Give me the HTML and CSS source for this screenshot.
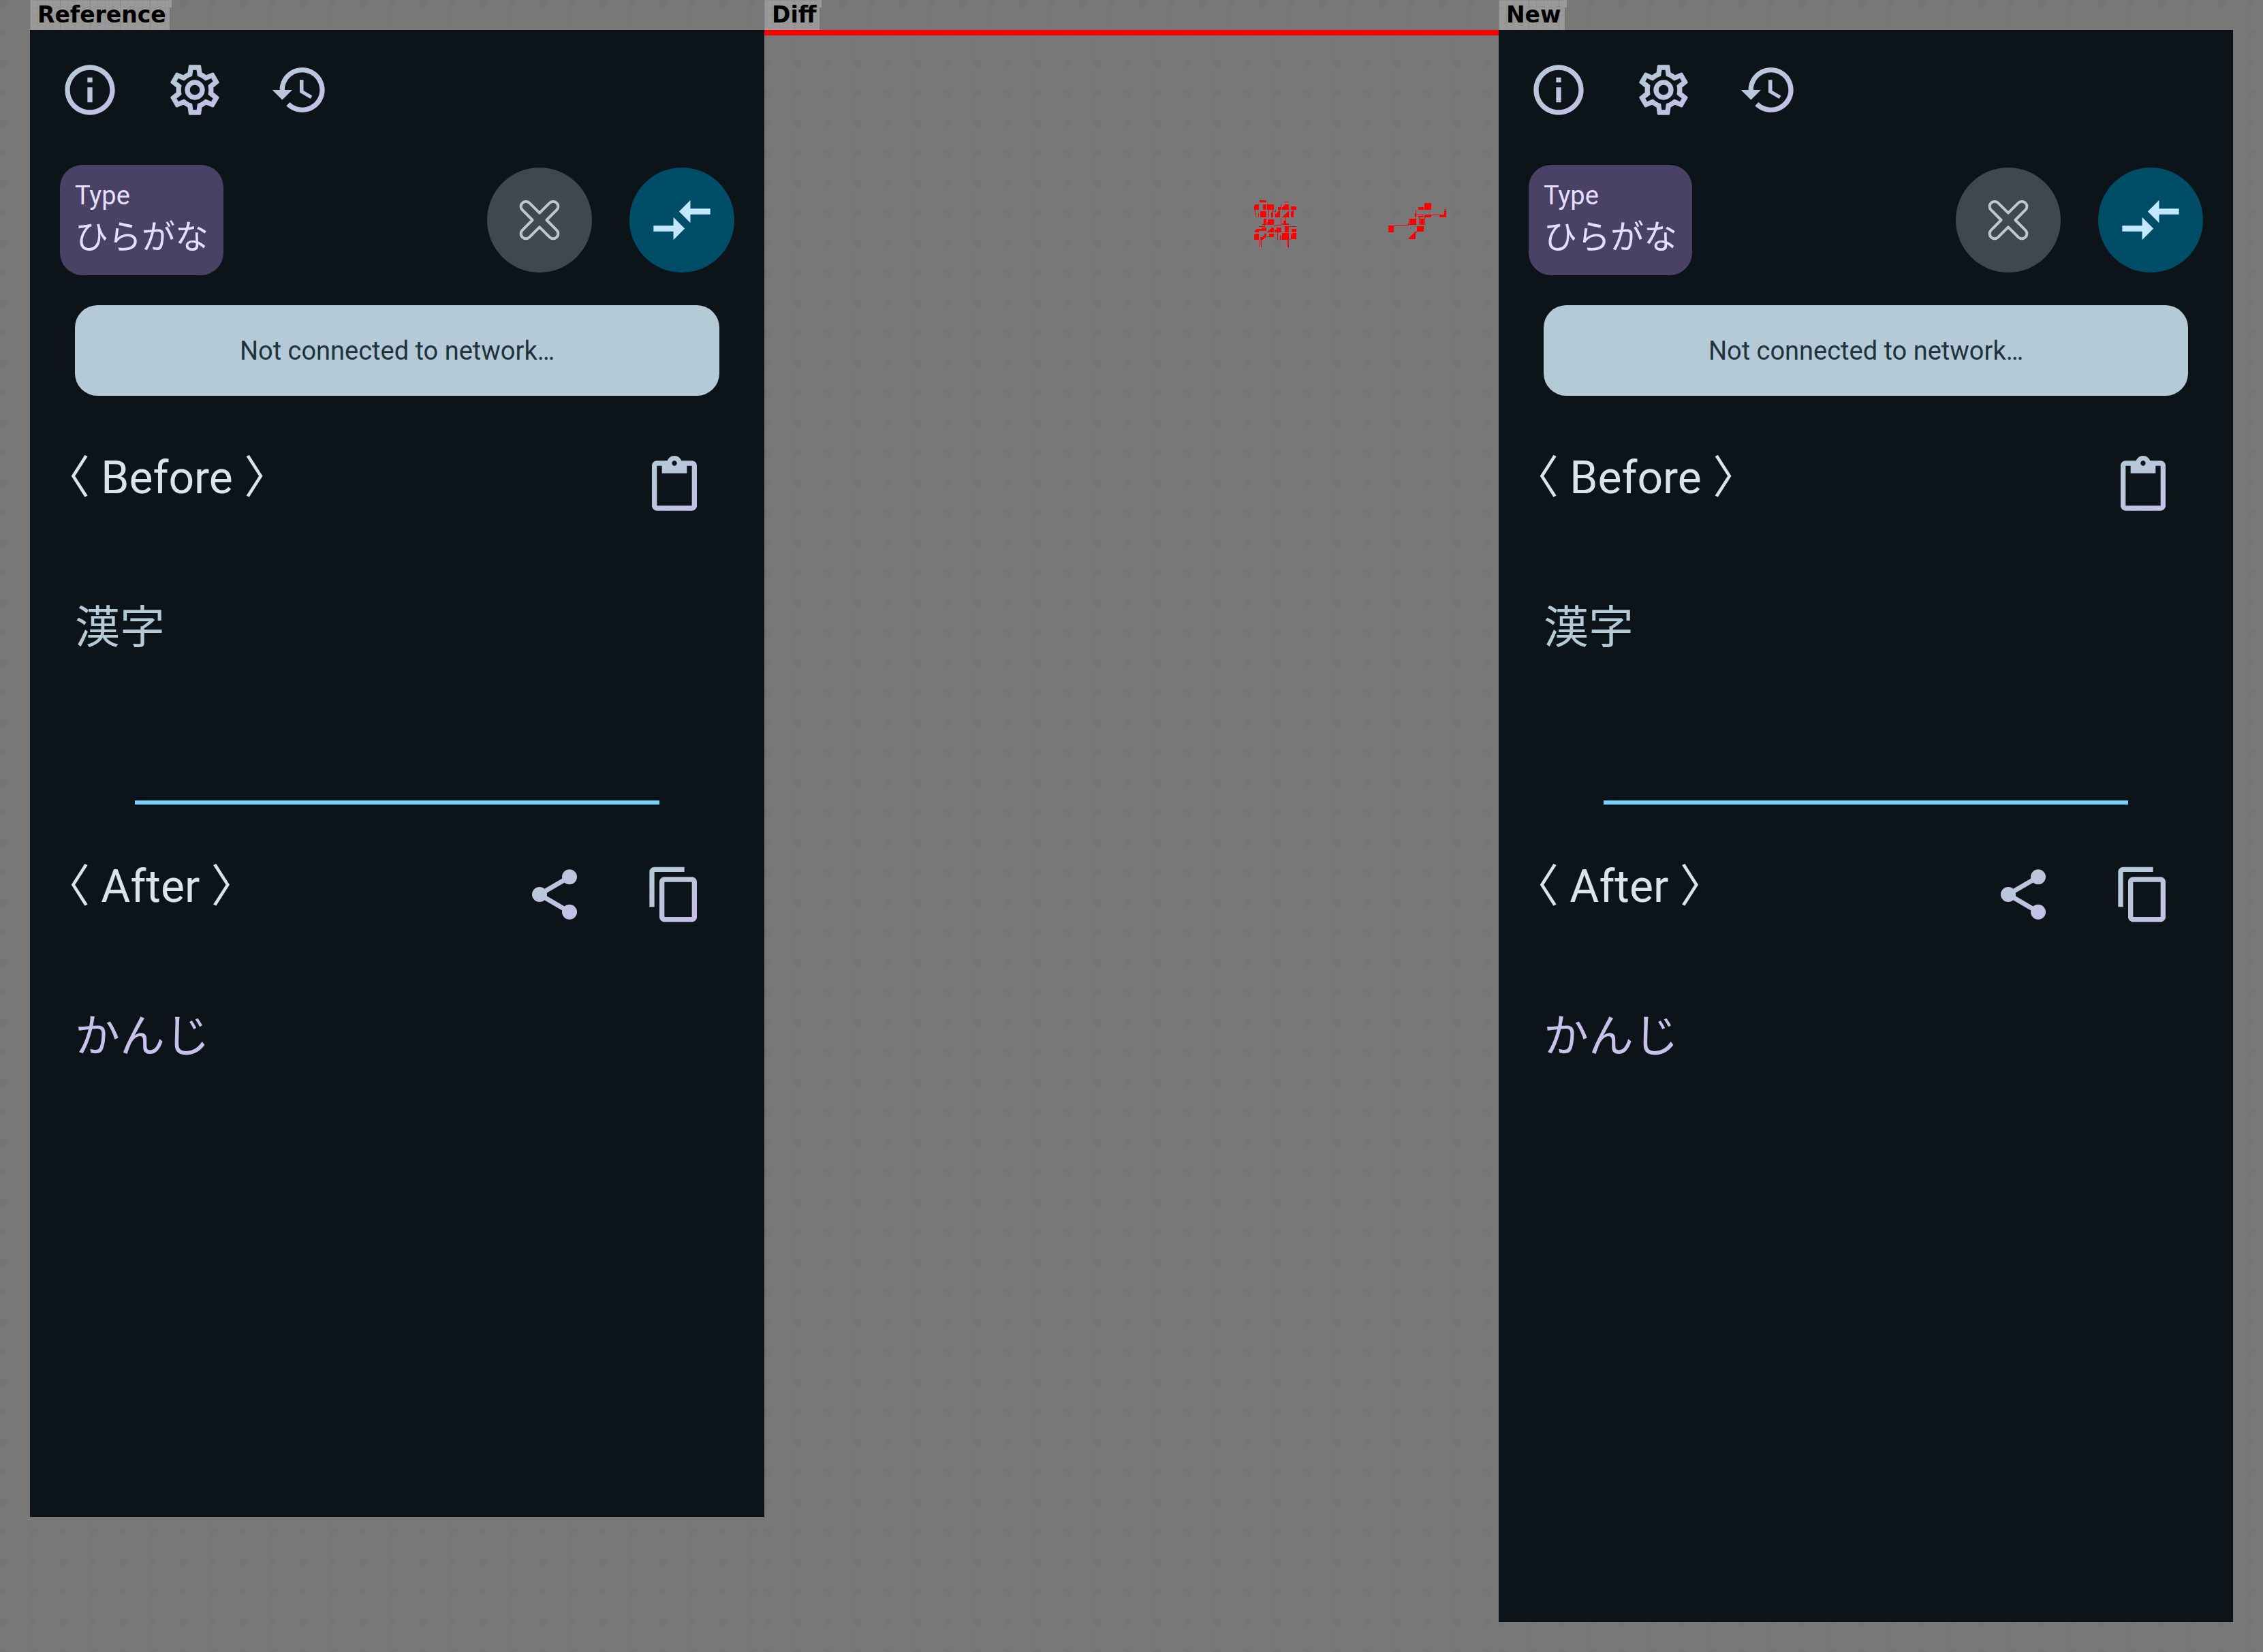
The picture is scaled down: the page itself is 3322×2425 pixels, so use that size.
FILE: index.html
```html
<!DOCTYPE html>
<html lang="en">
<head>
<meta charset="utf-8">
<meta name="viewport" content="width=device-width, initial-scale=1">
<title>Screenshot comparison</title>
<link rel="stylesheet" href="styles.css">
</head>
<body>
<svg class="defs" aria-hidden="true">
  <defs>
    <linearGradient id="tint" gradientUnits="userSpaceOnUse" x1="3" y1="3" x2="21" y2="21">
      <stop offset="0" stop-color="#b4cad6"/>
      <stop offset="1" stop-color="#c6bfe6"/>
    </linearGradient>
    <symbol id="i-info" viewBox="0 0 24 24"><path fill="url(#tint)" d="M11 7h2v2h-2zm0 4h2v6h-2zm1-9C6.48 2 2 6.48 2 12s4.480 10 10 10 10-4.480 10-10S17.520 2 12 2zm0 18c-4.410 0-8-3.590-8-8s3.590-8 8-8 8 3.590 8 8-3.590 8-8 8z"/></symbol>
    <symbol id="i-settings" viewBox="0 0 24 24"><path fill="url(#tint)" fill-rule="evenodd" d="M19.43 12.98c.04-.32.07-.64.07-.98 0-.34-.03-.66-.07-.98l2.11-1.65c.19-.15.24-.42.12-.64l-2-3.46c-.09-.16-.26-.25-.44-.25-.06 0-.12.01-.17.03l-2.49 1c-.52-.4-1.08-.73-1.69-.98l-.38-2.65C14.46 2.18 14.25 2 14 2h-4c-.25 0-.46.18-.49.42l-.38 2.65c-.61.25-1.17.59-1.69.98l-2.49-1c-.06-.02-.12-.03-.18-.03-.17 0-.34.09-.43.25l-2 3.46c-.13.22-.07.49.12.64l2.11 1.65c-.04.32-.07.65-.07.98 0 .33.03.66.07.98l-2.11 1.65c-.19.15-.24.42-.12.64l2 3.46c.09.16.26.25.44.25.06 0 .12-.01.17-.03l2.49-1c.52.4 1.08.73 1.69.98l.38 2.65c.03.24.24.42.49.42h4c.25 0 .46-.18.49-.42l.38-2.65c.61-.25 1.17-.59 1.69-.98l2.49 1c.06.02.12.03.18.03.17 0 .34-.09.43-.25l2-3.46c.12-.22.07-.49-.12-.64l-2.11-1.65zm-1.98-1.71c.04.31.05.52.05.73 0 .21-.02.43-.05.73l-.14 1.13.89.7 1.08.84-.7 1.21-1.27-.51-1.04-.42-.9.68c-.43.32-.84.56-1.25.73l-1.06.43-.16 1.13-.2 1.35h-1.4l-.19-1.35-.16-1.13-1.06-.43c-.43-.18-.83-.41-1.23-.71l-.91-.7-1.06.43-1.27.51-.7-1.21 1.08-.84.89-.7-.14-1.13c-.03-.31-.05-.54-.05-.74s.02-.43.05-.73l.14-1.13-.89-.7-1.08-.84.7-1.21 1.27.51 1.04.42.9-.68c.43-.32.84-.56 1.25-.73l1.06-.43.16-1.13.2-1.35h1.39l.19 1.35.16 1.13 1.06.43c.43.18.83.41 1.23.71l.91.7 1.06-.43 1.27-.51.7 1.21-1.07.85-.89.7.14 1.13z"/><circle cx="12" cy="12" r="3" fill="none" stroke="url(#tint)" stroke-width="2"/></symbol>
    <symbol id="i-history" viewBox="0 0 24 24"><path fill="url(#tint)" d="M13 3c-4.970 0-9 4.030-9 9H1l3.890 3.890.07.14L9 12H6c0-3.870 3.130-7 7-7s7 3.130 7 7-3.130 7-7 7c-1.930 0-3.680-.79-4.940-2.060l-1.420 1.420C8.270 19.990 10.510 21 13 21c4.970 0 9-4.030 9-9s-4.030-9-9-9zm-1 5v5l4.280 2.540.72-1.210-3.500-2.080V8H12z"/></symbol>
    <symbol id="i-paste" viewBox="0 0 24 24"><path fill="url(#tint)" d="M19 2h-4.180C14.400.84 13.300 0 12 0c-1.300 0-2.400.84-2.820 2H5c-1.100 0-2 .9-2 2v16c0 1.100.9 2 2 2h14c1.100 0 2-.9 2-2V4c0-1.100-.9-2-2-2zm-7 0c.55 0 1 .45 1 1s-.45 1-1 1-1-.45-1-1 .45-1 1-1zm7 18H5V4h2v3h10V4h2v16z"/></symbol>
    <symbol id="i-copy" viewBox="0 0 24 24"><path fill="url(#tint)" d="M16 1H4c-1.100 0-2 .9-2 2v14h2V3h12V1zm3 4H8c-1.100 0-2 .9-2 2v14c0 1.100.9 2 2 2h11c1.100 0 2-.9 2-2V7c0-1.100-.9-2-2-2zm0 16H8V7h11v14z"/></symbol>
    <symbol id="i-share" viewBox="0 0 24 24"><g fill="url(#tint)"><circle cx="18" cy="5" r="3"/><circle cx="6" cy="12" r="3"/><circle cx="18" cy="19" r="3"/></g><path fill="none" stroke="url(#tint)" stroke-width="1.900" d="M18 5L6 12l12 7"/></symbol>
    <symbol id="i-clear" viewBox="-50 -50 100 100"><path fill="none" stroke="#c0c7cd" stroke-width="4" stroke-linejoin="round" d="M0-10.400L14.800-25.200A7.350 7.350 0 0 1 25.200-14.800L10.400 0 25.200 14.800A7.350 7.350 0 0 1 14.800 25.200L0 10.400-14.800 25.200A7.350 7.350 0 0 1-25.200 14.800L-10.400 0-25.200-14.800A7.350 7.350 0 0 1-14.800-25.200Z"/></symbol>
    <symbol id="i-convert" viewBox="0 0 24 24"><path fill="#c2e8ff" d="M9.010 14H2v2h7.010v3L13 15l-3.990-4v3zm5.980-1v-3H22V8h-7.010V5L11 9l3.990 4z"/></symbol>
  </defs>
</svg>

<main class="compare">
  <section class="pane">
    <h2 class="tag">Reference</h2>
    <div class="screen screen-short">
      <nav class="toolbar">
        <button class="icon-btn" aria-label="Info"><svg><use href="#i-info"/></svg></button>
        <button class="icon-btn" aria-label="Settings"><svg><use href="#i-settings"/></svg></button>
        <button class="icon-btn" aria-label="History"><svg><use href="#i-history"/></svg></button>
      </nav>
      <div class="actions">
        <button class="type-btn"><span class="type-label">Type</span><span class="type-value" lang="ja">ひらがな</span></button>
        <button class="round clear" aria-label="Clear"><svg><use href="#i-clear"/></svg></button>
        <button class="round convert" aria-label="Convert"><svg><use href="#i-convert"/></svg></button>
      </div>
      <p class="notice">Not connected to network…</p>
      <div class="block-head">
        <h3 class="block-title"><label for="in-a">〈 Before 〉</label></h3>
        <button class="icon-btn" aria-label="Paste"><svg><use href="#i-paste"/></svg></button>
      </div>
      <textarea class="source" id="in-a" lang="ja">漢字</textarea>
      <hr class="rule">
      <div class="block-head">
        <h3 class="block-title">〈 After 〉</h3>
        <button class="icon-btn" aria-label="Share"><svg><use href="#i-share"/></svg></button>
        <button class="icon-btn" aria-label="Copy"><svg><use href="#i-copy"/></svg></button>
      </div>
      <p class="result" lang="ja">かんじ</p>
    </div>
  </section>

  <section class="pane">
    <h2 class="tag">Diff</h2>
    <div class="diff-area">
      <svg class="marks" viewBox="0 0 1078 2337" role="img" aria-label="Changed pixels">
        <g transform="translate(658 216) scale(.33333)" fill="#f00" shape-rendering="crispEdges">
          <path d="M207 102h30v9h-30zM315 108h21v3h-21zM186 120h18v24h-21v-18h3zM222 120h15v24h-15zM240 120h30v24h-30zM288 132h12v-12h3v24h-15zM306 144v-12h6v-6h6v-6h18v24zM345 129h24v15h-24zM186 144h3v33h-3zM201 159h3v18h-3zM210 150h27v27h-27zM246 144h3v33h-3zM264 144h3v33h-9v-21h6zM270 150h6v-6h3v9h-9zM276 177v-15h6v-6h6v-6h6v-6h3v33zM306 177v-3h6v-6h6v-6h6v-6h6v-6h6v27zM336 144h3v3h-3zM354 144h3v33h-12v-27h9z"/>
          <path d="M225 183h12v27h-21v-4h9zM243 186h27v24h-30v-12h3zM300 180h3v30h-3zM321 177h3v27h12v6h-30v-6h6v-12h9zM204 216h24v-6h3v9h-27zM270 213h33v3h-33zM336 215h33v4h-33zM186 243v-9h6v-6h12v15zM204 234v-6h12v-6h21v15h-33zM240 243v-3h6v-6h6v-6h6v-6h12v21zM273 243v-13h9v-8h21v21zM318 216h18v27h-18zM348 228h21v15h-21z"/>
          <path d="M183 252h6v-3h15v27h-21zM210 276v-12h12v-6h6v-8h9v12h-3v6h-6v6h-6v2zM237 261h12v-12h21v15h-33zM285 243h3v33h-3zM297 255h6v21h-6zM306 246h30v30h-30zM345 276v-24h6v-6h18v27h-30v3zM207 276h3v33h-3zM213 276h3v33h-3zM327 276h3v33h-3zM333 276h3v33h-3z"/>
          <path d="M933 114h30v30h-30zM906 132h24v12h-24zM894 144h3v33h-6v-18h3zM897 165h33v3h-33zM906 171h24v6h-24zM909 177h3v33h-3zM915 183h15v27h-15zM933 177h3v33h-3zM939 165h57v3h-33v9h-30v-9h6zM1020 141h9v3h-9zM1020 147h9v30h-30v-12h21zM867 183h30v27h-30zM861 201h3v9h-3zM774 213h90v3h-66v27h-24zM900 216h30v24h-30zM894 240h6v3h-3v3h-3v27h-30v-3l30-30z"/>
        </g>
      </svg>
    </div>
  </section>

  <section class="pane">
    <h2 class="tag">New</h2>
    <div class="screen screen-tall">
      <nav class="toolbar">
        <button class="icon-btn" aria-label="Info"><svg><use href="#i-info"/></svg></button>
        <button class="icon-btn" aria-label="Settings"><svg><use href="#i-settings"/></svg></button>
        <button class="icon-btn" aria-label="History"><svg><use href="#i-history"/></svg></button>
      </nav>
      <div class="actions">
        <button class="type-btn"><span class="type-label">Type</span><span class="type-value" lang="ja">ひらがな</span></button>
        <button class="round clear" aria-label="Clear"><svg><use href="#i-clear"/></svg></button>
        <button class="round convert" aria-label="Convert"><svg><use href="#i-convert"/></svg></button>
      </div>
      <p class="notice">Not connected to network…</p>
      <div class="block-head">
        <h3 class="block-title"><label for="in-b">〈 Before 〉</label></h3>
        <button class="icon-btn" aria-label="Paste"><svg><use href="#i-paste"/></svg></button>
      </div>
      <textarea class="source" id="in-b" lang="ja">漢字</textarea>
      <hr class="rule">
      <div class="block-head">
        <h3 class="block-title">〈 After 〉</h3>
        <button class="icon-btn" aria-label="Share"><svg><use href="#i-share"/></svg></button>
        <button class="icon-btn" aria-label="Copy"><svg><use href="#i-copy"/></svg></button>
      </div>
      <p class="result" lang="ja">かんじ</p>
    </div>
  </section>
</main>
</body>
</html>
```

FILE: styles.css
```css
* { box-sizing: border-box; }

body {
  margin: 0;
  font-family: Roboto, "Noto Sans CJK JP", sans-serif;
}

/* faint 44px canvas grid */
body, .diff-area {
  background-color: #787878;
  background-image:
    conic-gradient(from 270deg at 10px 10px, #757575 90deg, transparent 0),
    linear-gradient(90deg, #767676 1px, transparent 1px),
    linear-gradient(#767676 1px, transparent 1px);
  background-size: 44px 44px;
}

h2, h3, p { margin: 0; font-weight: 400; }

button {
  border: 0;
  padding: 0;
  background: none;
  color: inherit;
  font: inherit;
  cursor: pointer;
}

.defs { position: absolute; width: 0; height: 0; }

.compare {
  display: grid;
  grid-template-columns: repeat(3, 1fr);
  min-height: 100vh;
  padding: 0 44px;
}

.pane {
  display: flex;
  flex-direction: column;
  align-items: flex-start;
}

.tag {
  position: relative;
  height: 44px;
  padding: 0 5px 0 11px;
  font: 700 33px/44px "DejaVu Sans", sans-serif;
  color: #000;
  background-color: #999;
  background-image:
    linear-gradient(90deg, #8a8a8a 1px, transparent 1px),
    linear-gradient(90deg, #919191 1px, transparent 1px),
    linear-gradient(#919191 1px, transparent 1px);
  background-size: 44px 44px, 11px 11px, 11px 11px;
}
.tag::after {
  content: "";
  position: absolute;
  top: 0;
  left: 100%;
  width: 3px;
  height: 11px;
  background: #999;
}

.screen {
  width: 100%;
  background: #0c1319;
}
.screen-short { aspect-ratio: 1078 / 2183; }
.screen-tall { aspect-ratio: 1078 / 2337; }

.toolbar {
  display: flex;
  gap: 66px;
  padding: 44px;
}

.icon-btn { width: 88px; height: 88px; }
.icon-btn svg { display: block; width: 88px; height: 88px; }

.actions {
  display: flex;
  align-items: center;
  gap: 55px;
  padding: 22px 44px 44px;
}

.type-btn {
  display: flex;
  flex-direction: column;
  align-items: flex-start;
  margin-right: auto;
  padding: 22px 22px 16px;
  border-radius: 33px;
  background: #494264;
  color: #e6deff;
}
.type-label { font-size: 38px; line-height: 46px; }
.type-value { font-size: 49px; line-height: 78px; }

.round {
  display: flex;
  align-items: center;
  justify-content: center;
  width: 154px;
  height: 154px;
  border-radius: 50%;
}
.round svg { width: 100px; height: 100px; }
.clear { background: #41484d; }
.convert { background: #004d67; }

.notice {
  margin: 0 66px 88px;
  padding: 45px 44px 43px;
  border-radius: 33px;
  font-size: 38px;
  line-height: 45px;
  text-align: center;
  color: #1f333c;
  background: #b4cad6;
}

.block-head {
  display: flex;
  align-items: flex-start;
  gap: 88px;
  padding: 0 88px 0 22px;
}
.block-title {
  flex: 1;
  font-size: 66px;
  line-height: 66px;
  color: #dce3e9;
}

.source, .result {
  display: block;
  width: 100%;
  margin: 0;
  padding: 117px 66px 0;
  font: 400 66px/96px Roboto, "Noto Sans CJK JP", sans-serif;
}
.source {
  height: 330px;
  border: 0;
  outline: 0;
  resize: none;
  color: #b4cad6;
  background: none;
}
.result { color: #c9c1e9; }

.rule {
  height: 6px;
  margin: 88px 154px;
  border: 0;
  background: #76d1ff;
}

.diff-area {
  width: 100%;
  flex: 1;
  border-top: 8px solid #f00;
  background-origin: border-box;
}
.marks { display: block; width: 100%; margin-top: -8px; }
```
